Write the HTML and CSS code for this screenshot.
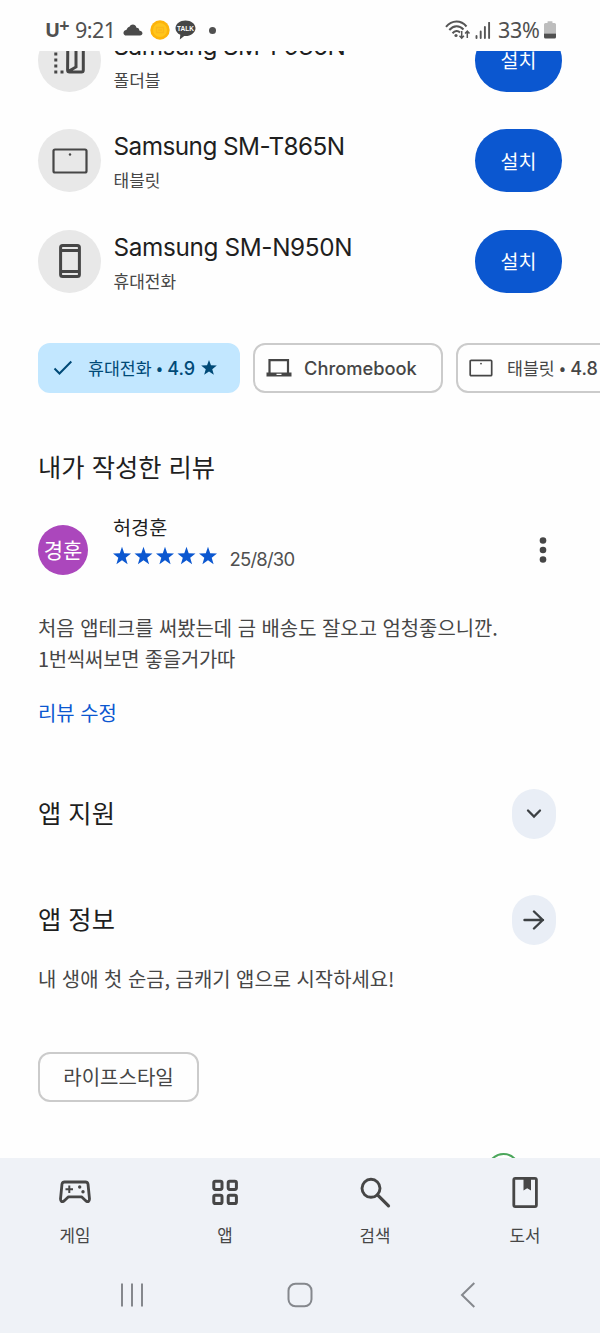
FILE: index.html
```html
<!DOCTYPE html>
<html lang="ko">
<head>
<meta charset="utf-8">
<title>앱 정보</title>
<link rel="stylesheet" href="styles.css">
</head>
<body>
<div class="screen">
  <header class="status">
    <div class="status-left">
      <span class="carrier">U<span class="carrier-plus">+</span></span>
      <span class="clock">9:21</span>
      <svg class="cloud" width="20" height="12" viewBox="0 0 20 12"><path d="M3.500 11.500C-.500 11.500-.500 6.500 3.300 6C4.500 3.500 5.500 3 6.500 2.800C8-.300 12.500-.200 13.500 3.700C15.500 3.600 16.300 5 16.300 6.500C20.500 7 20.300 11.500 17 11.500Z" fill="#4a4a4a"/></svg>
      <svg class="coin" width="20" height="20" viewBox="0 0 20 20"><circle cx="10" cy="10" r="9.700" fill="#fdb40a"/><circle cx="10" cy="10" r="7" fill="#ffc61c"/><path d="M6.500 7.500h7v5h-7zM8 10h4" fill="none" stroke="#fbb81a" stroke-width="1.300"/></svg>
      <svg class="talk" width="21" height="20" viewBox="0 0 21 20"><path d="M10.500.500C16 .500 20.500 3.900 20.500 8.200S16 16 10.500 16L9.200 15.900L4.800 19.500L5.300 14.800C2.400 13.500.500 11 .500 8.200C.500 3.900 5 .500 10.500.500Z" fill="#464646"/><text class="talk-text" x="10.500" y="10.900" text-anchor="middle">TALK</text></svg>
      <span class="dot"></span>
    </div>
    <div class="status-right">
      <svg class="wifi" width="26" height="20" viewBox="0 0 26 20"><g fill="none" stroke="#555" stroke-width="2"><path d="M1 6.800C7-.200 16-.200 21.500 6.500"/><path d="M4.300 10C8.500 5 14.500 5 18.500 9.500"/><path d="M7.500 13.200C10 10.500 13 10.500 15 12.500"/></g><circle cx="11" cy="15.500" r="1.600" fill="#555"/><path d="M16.700 11v7M14.500 15.800l2.200 2.400l2.200-2.400M22.300 18v-6.500M20.100 13.600l2.200-2.400l2.200 2.400" fill="none" stroke="#555" stroke-width="1.500"/></svg>
      <svg class="signal" width="16" height="17" viewBox="0 0 16 17"><path d="M1.500 14v2M5.700 9.500V16M9.900 5V16M14.100.800V16" fill="none" stroke="#555" stroke-width="1.900" stroke-linecap="round"/></svg>
      <span class="percent">33%</span>
      <svg class="battery" width="12" height="18" viewBox="0 0 12 18"><path d="M3.500 2V.700Q3.500.200 4 .200H8Q8.500.200 8.500.700V2H10.500Q12 2 12 3.500V12.500H0V3.500Q0 2 1.500 2Z" fill="#bdbdbd"/><path d="M0 12.500H12V16Q12 17.500 10.500 17.500H1.500Q0 17.500 0 16Z" fill="#505050"/></svg>
    </div>
  </header>

  <main class="content">
    <ul class="devices">
      <li class="device">
        <span class="device-icon"><svg width="34" height="40" viewBox="0 0 34 40"><path d="M1.300 12.500h3v3h-3zM1.300 18.500h3v3h-3zM1.300 24.500h3v3h-3zM1.300 30.500h3v3h-3zM7.500 30.500h3v3h-3z" fill="#464646"/><path d="M14.800 4H28.500Q30.300 4 30.300 6V30Q30.300 32 28.500 32H16.500Q14.600 32 14.600 30ZM23 4V27L16 31" fill="none" stroke="#464646" stroke-width="3"/></svg></span>
        <div class="device-text"><div class="device-name">Samsung SM-F936N</div><div class="device-kind">폴더블</div></div>
        <button class="install">설치</button>
      </li>
      <li class="device">
        <span class="device-icon"><svg width="36" height="26" viewBox="0 0 36 26"><rect x="1.500" y="1.500" width="33" height="23" rx="1.500" fill="none" stroke="#464646" stroke-width="2.200"/><circle cx="18" cy="6.500" r="1.200" fill="#464646"/></svg></span>
        <div class="device-text"><div class="device-name">Samsung SM-T865N</div><div class="device-kind">태블릿</div></div>
        <button class="install">설치</button>
      </li>
      <li class="device">
        <span class="device-icon"><svg width="24" height="36" viewBox="0 0 24 36"><rect x="2.600" y="2.400" width="18.800" height="31.200" rx="2" fill="none" stroke="#464646" stroke-width="3"/><path d="M2 7.500H22M2 28.500H22" stroke="#464646" stroke-width="2.800"/></svg></span>
        <div class="device-text"><div class="device-name n950">Samsung SM-N950N</div><div class="device-kind">휴대전화</div></div>
        <button class="install">설치</button>
      </li>
    </ul>

    <div class="filters">
      <div class="filter selected"><svg width="20" height="16" viewBox="0 0 20 16"><path d="M1.500 8.500L6.500 13.500L18.300 1.500" fill="none" stroke="#004a77" stroke-width="2"/></svg><span class="filter-label">휴대전화 <i class="bullet">•</i> <b class="score">4.9</b></span><svg class="filter-star" width="16" height="15" viewBox="0 0 24 23"><path d="M12 0l3 8.200 9 .400-7 5.500 2.400 8.700-7.400-5-7.400 5L7 14.100 0 8.600l9-.400z" fill="#004a77"/></svg></div>
      <div class="filter chrome"><svg width="26" height="20" viewBox="0 0 26 20"><path d="M3.500 15V2.200H22V15" fill="none" stroke="#464646" stroke-width="2.200"/><path d="M.500 14.500H25.500V18.500H.500ZM10.500 15.700V17H15.500V15.700Z" fill="#464646" fill-rule="evenodd"/></svg><span class="chrome-label">Chromebook</span></div>
      <div class="filter tablet"><svg width="24" height="18" viewBox="0 0 24 18"><rect x="1.200" y="1.300" width="21.500" height="15.400" rx="1" fill="none" stroke="#464646" stroke-width="1.700"/><circle cx="12" cy="4.600" r=".900" fill="#464646"/></svg><span class="filter-label">태블릿 <i class="bullet">•</i> <b class="score">4.8</b></span></div>
    </div>

    <h2 class="title review-title">내가 작성한 리뷰</h2>
    <section class="reviewer">
      <span class="avatar">경훈</span>
      <div class="reviewer-info">
        <div class="reviewer-name">허경훈</div>
        <div class="rating">
          <svg class="stars" width="104" height="20" viewBox="0 0 104 20"><g fill="#0b57d0"><path id="star" d="M9 .800l2.200 6.500 6.800.200-5.300 4.200 1.900 6.500L9 14.300l-5.600 3.900 1.900-6.500L0 7.500l6.800-.200z"/><use href="#star" x="21.500"/><use href="#star" x="43"/><use href="#star" x="64.500"/><use href="#star" x="86"/></g></svg>
          <span class="date">25/8/30</span>
        </div>
      </div>
      <svg class="more" width="10" height="28" viewBox="0 0 10 28"><g fill="#464646"><circle cx="5" cy="4.500" r="3.300"/><circle cx="5" cy="14" r="3.300"/><circle cx="5" cy="23.500" r="3.300"/></g></svg>
    </section>
    <p class="review">처음 앱테크를 써봤는데 금 배송도 잘오고 엄청좋으니깐.<br><span class="review-second">1번씩써보면 좋을거가따</span></p>
    <a class="edit">리뷰 수정</a>

    <section class="section support"><h2 class="title">앱 지원</h2><span class="round"><svg width="18" height="12" viewBox="0 0 18 12"><path d="M3 2.500L9 8.500L15 2.500" fill="none" stroke="#3c4043" stroke-width="2.300" stroke-linecap="round"/></svg></span></section>
    <section class="section about"><h2 class="title">앱 정보</h2><span class="round"><svg width="22" height="20" viewBox="0 0 22 20"><path d="M1.500 10H20M11 1.500L19.800 10L11 18.500" fill="none" stroke="#3c4043" stroke-width="2.400" stroke-linecap="round" stroke-linejoin="round"/></svg></span></section>
    <p class="summary">내 생애 첫 순금, 금캐기 앱으로 시작하세요!</p>
    <span class="category">라이프스타일</span>
    <div class="ring"></div>
  </main>

  <nav class="tabs">
    <div class="tab"><svg width="34" height="34" viewBox="0 0 34 34"><path d="M6.500 7H27.500Q29.500 7 30 9L31.500 24Q31.300 28 28 26L23.500 21.800H10.500L6 26Q2.700 28 2.500 24L4 9Q4.500 7 6.500 7Z" fill="none" stroke="#464646" stroke-width="2.800" stroke-linejoin="round"/><path d="M11.300 10.500V18M7.500 14.300H15" stroke="#464646" stroke-width="2"/><circle cx="21.700" cy="12" r="1.700" fill="#464646"/><circle cx="25" cy="16.800" r="1.700" fill="#464646"/></svg><span>게임</span></div>
    <div class="tab"><svg width="34" height="34" viewBox="0 0 34 34"><g fill="none" stroke="#464646" stroke-width="3"><rect x="5.800" y="6.200" width="8.200" height="8.200" rx="1.600"/><rect x="20.200" y="6.200" width="8.200" height="8.200" rx="1.600"/><rect x="5.800" y="20.300" width="8.200" height="8.200" rx="1.600"/><rect x="20.200" y="20.300" width="8.200" height="8.200" rx="1.600"/></g></svg><span>앱</span></div>
    <div class="tab"><svg width="34" height="34" viewBox="0 0 34 34"><circle cx="13" cy="13.300" r="9" fill="none" stroke="#464646" stroke-width="2.900"/><path d="M19.500 19.800L30.500 30.800" stroke="#464646" stroke-width="3.200" stroke-linecap="round"/></svg><span>검색</span></div>
    <div class="tab"><svg width="34" height="34" viewBox="0 0 34 34"><rect x="5.800" y="3.300" width="22.600" height="28.300" rx="1.500" fill="none" stroke="#464646" stroke-width="2.800"/><path d="M15.500 2.500H23V15.500L19.200 13.300L15.500 15.500Z" fill="#464646"/></svg><span>도서</span></div>
  </nav>
  <div class="system">
    <svg class="recents" width="24" height="24" viewBox="0 0 24 24"><path d="M2 .500V23.500M12 .500V23.500M22 .500V23.500" stroke="#85888d" stroke-width="2"/></svg>
    <svg class="home" width="28" height="28" viewBox="0 0 28 28"><rect x="2.500" y="2.700" width="23" height="22.600" rx="7" fill="none" stroke="#85888d" stroke-width="2"/></svg>
    <svg class="back" width="16" height="26" viewBox="0 0 16 26"><path d="M14.300 1L2 13L14.300 25" fill="none" stroke="#85888d" stroke-width="2"/></svg>
  </div>
</div>
</body>
</html>
```
FILE: styles.css
```css
* { box-sizing: border-box; }
body { margin: 0; background: #fefefe; font-family: "Noto Sans CJK KR", sans-serif; color: #1f1f1f; }
svg { display: block; flex: none; }
h2, p, ul { margin: 0; padding: 0; font-weight: 400; }
.screen { width: 600px; height: 1333px; overflow: hidden; display: flex; flex-direction: column; }

.status { height: 51px; flex: none; display: flex; justify-content: space-between; padding: 9px 44px 0 45px; color: #505050; }
.status-left, .status-right { display: flex; align-items: center; height: 42px; }
.carrier { font: 700 20px/24px "Open Sans", sans-serif; width: 30px; display: flex; }
.carrier-plus { font-size: 18px; line-height: 14px; margin-left: -1px; }
.clock { font: 400 21.500px/24px "Noto Sans", sans-serif; width: 48px; letter-spacing: -0.500px; }
.cloud { margin-top: -1px; }
.coin { margin-left: 7px; }
.talk { margin-left: 5px; }
.talk-text { font: 700 6.500px "Liberation Sans", sans-serif; fill: #fff; }
.dot { width: 7px; height: 7px; border-radius: 50%; background: #505050; margin-left: 13px; }
.signal { margin-left: 4px; }
.percent { font: 400 21.500px/24px "Noto Sans", sans-serif; letter-spacing: -0.300px; margin-left: 7px; width: 46px; }

.content { height: 1107px; flex: none; overflow: hidden; padding-left: 38px; }
.devices { list-style: none; margin-top: -40.500px; }
.device { height: 100.500px; display: flex; align-items: flex-start; padding-right: 38px; }
.device-icon { width: 63px; height: 63px; border-radius: 50%; background: #e8e8e8; display: flex; align-items: center; justify-content: center; margin-top: 18px; flex: none; }
.device-text { flex: 1; padding: 18px 0 0 12.500px; }
.device-name { font: 400 24.300px/34px Inter, sans-serif; letter-spacing: -0.530px; white-space: nowrap; }
.n950 { letter-spacing: -0.350px; }
.device-kind { font-size: 17px; line-height: 24px; margin-top: 5px; color: #464646; }
.install { width: 87px; height: 63px; margin-top: 18px; border: 0; border-radius: 32px; background: #0b57d0; color: #fff; font: 400 19.500px/28px "Noto Sans CJK KR", sans-serif; padding: 0; }

.filters { display: flex; width: 700px; gap: 13px; margin-top: 30.500px; }
.filter { height: 50px; border: 2px solid #cbcbcb; border-radius: 12px; display: flex; align-items: center; flex: none; color: #464646; }
.selected { width: 202px; border-color: #c2e7ff; background: #c2e7ff; color: #004a77; padding-left: 13px; }
.chrome { width: 190px; padding-left: 11px; }
.tablet { width: 203px; padding-left: 11px; }
.filter-label { font-size: 17.300px; font-weight: 400; margin-left: 15px; white-space: nowrap; }
.tablet .filter-label { margin-left: 14px; }
.bullet { font-style: normal; }
.score { font: 500 18px Inter, sans-serif; }
.filter-star { margin-left: 6px; }
.chrome-label { font: 500 18.300px Inter, sans-serif; margin-left: 12px; }

.title { font-size: 25.300px; line-height: 38px; }
.review-title { margin-top: 54.500px; }
.reviewer { display: flex; height: 64px; margin-top: 27.500px; }
.avatar { width: 50px; height: 50px; border-radius: 50%; background: #ab47bc; color: #fff; font-size: 21px; line-height: 48px; text-align: center; margin-top: 12px; }
.reviewer-info { margin-left: 25px; width: 388px; }
.reviewer-name { font-size: 19.700px; line-height: 28px; }
.rating { display: flex; align-items: center; height: 28px; margin-top: 1px; }
.stars { margin-left: -0.500px; }
.date { font: 400 18.500px Inter, sans-serif; letter-spacing: -0.800px; color: #505050; margin: 6px 0 0 13px; }
.more { margin: 23px 0 0 37px; }
.review { font-size: 19.900px; line-height: 31.500px; color: #464646; margin-top: 35px; white-space: nowrap; }
.review-second { letter-spacing: -0.200px; }
.edit { display: block; font-size: 19.900px; line-height: 30px; color: #0b57d0; margin-top: 23px; }
.section { display: flex; align-items: center; justify-content: space-between; height: 50px; padding-right: 44px; }
.section .title { padding-bottom: 4px; }
.support { margin-top: 61px; }
.about { margin-top: 56.500px; }
.round { width: 44px; height: 50px; border-radius: 22px; background: #e9eef6; display: flex; align-items: center; justify-content: center; }
.summary { font-size: 19.900px; line-height: 30px; color: #464646; margin-top: 19px; white-space: nowrap; }
.category { display: block; width: 161px; height: 50px; border: 2px solid #cbcbcb; border-radius: 12px; color: #464646; font-size: 20px; line-height: 45px; text-align: center; margin-top: 58px; }
.ring { width: 33px; height: 33px; border: 2px solid #4ba65b; border-radius: 50%; margin: 51px 0 0 449px; }

.tabs { height: 100px; flex: none; background: #eff2f7; display: grid; grid-template-columns: repeat(4, 1fr); padding-top: 17px; }
.tab { display: flex; flex-direction: column; align-items: center; font-size: 16.800px; line-height: 24px; color: #464646; }
.tab span { margin-top: 14px; }
.system { height: 75px; flex: none; background: #eff2f7; display: flex; align-items: center; padding: 0 0 2px 120px; }
.home { margin-left: 142px; }
.back { margin-left: 146px; }
```
